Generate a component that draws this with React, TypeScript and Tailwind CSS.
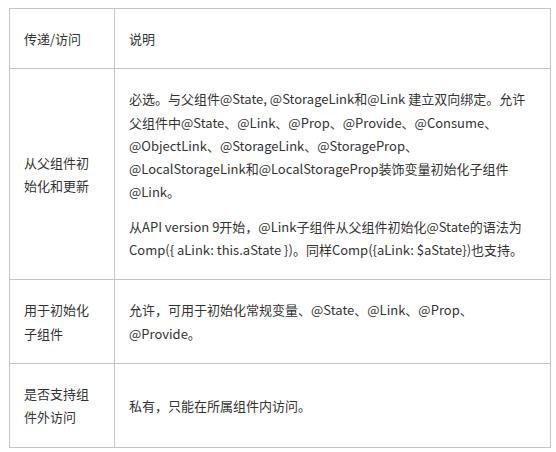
const font = { fontFamily: '"Noto Sans CJK SC", sans-serif' };

const rows: { label: string[]; body: React.ReactNode }[] = [
  {
    label: ["从父组件初", "始化和更新"],
    body: (
      <>
        <p>
          必选。与父组件@State, @StorageLink和@Link 建立双向绑定。允许<br />
          父组件中@State、@Link、@Prop、@Provide、@Consume、<br />
          @ObjectLink、@StorageLink、@StorageProp、<br />
          @LocalStorageLink和@LocalStorageProp装饰变量初始化子组件<br />
          @Link。
        </p>
        <p className="mt-[11px]">
          从API version 9开始，@Link子组件从父组件初始化@State的语法为<br />
          Comp({"{"} aLink: this.aState {"}"})。同样Comp({"{"}aLink: $aState{"}"})也支持。
        </p>
      </>
    ),
  },
  {
    label: ["用于初始化", "子组件"],
    body: (
      <p>
        允许，可用于初始化常规变量、@State、@Link、@Prop、<br />
        @Provide。
      </p>
    ),
  },
  {
    label: ["是否支持组", "件外访问"],
    body: <p>私有，只能在所属组件内访问。</p>,
  },
];

export default function App() {
  return (
    <div className="w-[556px] h-[452px] bg-white pt-[8px] pl-[9px]" style={font}>
      <table className="w-[542px] table-fixed border-collapse text-[13px] leading-[23.3px] text-[#333333]">
        <colgroup>
          <col className="w-[105px]" />
          <col />
        </colgroup>
        <tbody>
          <tr>
            <td className="border border-[#c4c4c4] px-[14px] py-[18px] align-middle whitespace-nowrap">传递/访问</td>
            <td className="border border-[#c4c4c4] px-[14px] py-[18px] align-middle">说明</td>
          </tr>
          {rows.map((r, i) => (
            <tr key={i}>
              <td className="border border-[#c4c4c4] px-[14px] py-[18px] align-middle whitespace-nowrap">
                {r.label.map((l, j) => (
                  <div key={j}>{l}</div>
                ))}
              </td>
              <td className="border border-[#c4c4c4] px-[14px] py-[18px] align-middle whitespace-nowrap">{r.body}</td>
            </tr>
          ))}
        </tbody>
      </table>
    </div>
  );
}
